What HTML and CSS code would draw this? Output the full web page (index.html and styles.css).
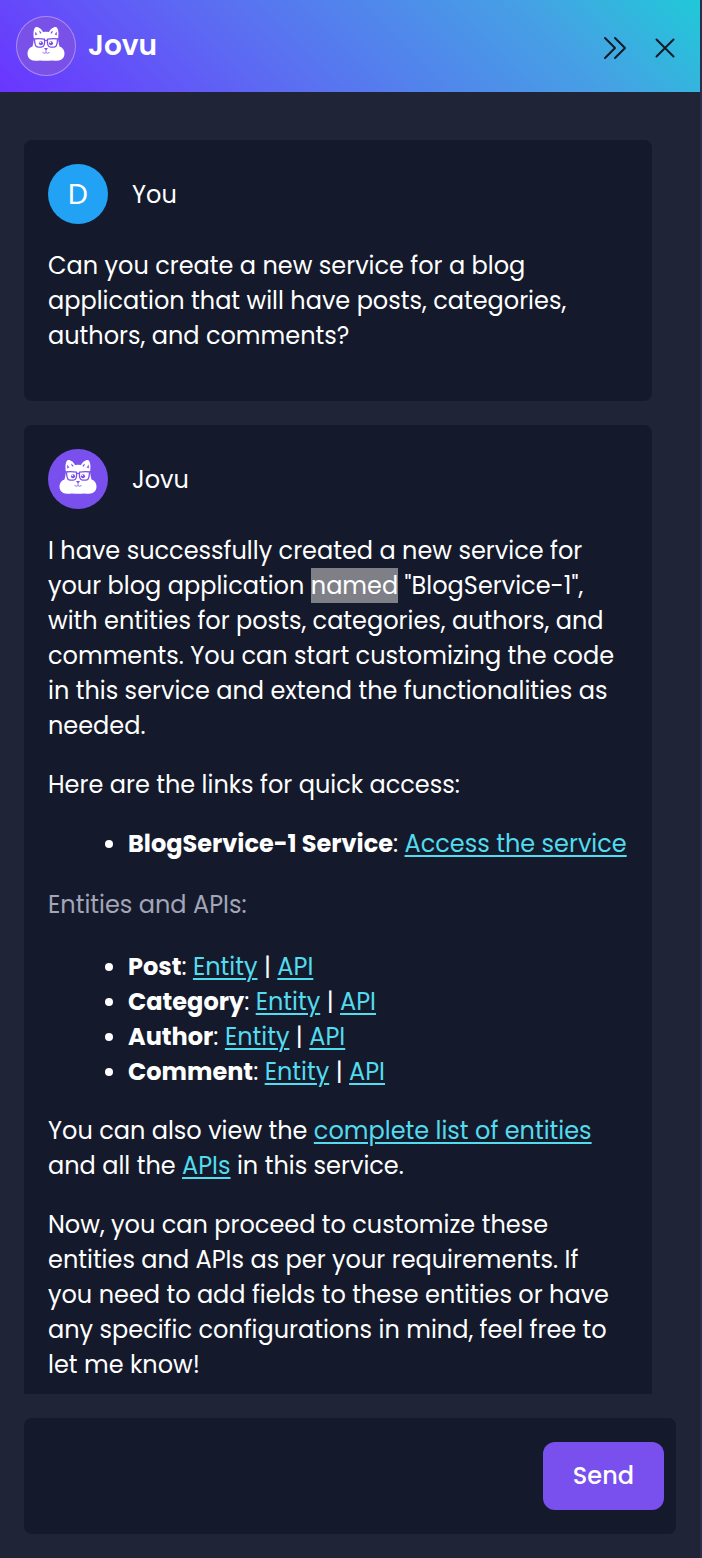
FILE: index.html
```html
<!DOCTYPE html>
<html lang="en">
<head>
<meta charset="utf-8">
<meta name="viewport" content="width=device-width, initial-scale=1">
<title>Jovu</title>
<link rel="stylesheet" href="styles.css">
</head>
<body>
<svg class="sprite" aria-hidden="true">
  <symbol id="fox" viewBox="0 0 60 60">
    <path fill="#fff" d="M18 23C16.800 17 17.800 11 20.400 11C23 11 25.800 13.500 27 16Q30 15.500 33 16C34.200 13.500 37 11 39.600 11C42.200 11 43.200 17 42 23Q42.600 27 43.500 30.600C46.800 31.600 48.500 34.400 48.500 37.600C48.500 42 45.500 44.800 41 44.800Q37.500 44.800 36 44.400Q30 45.200 24 44.400Q22.500 44.800 19 44.800C14.500 44.800 11.500 42 11.500 37.600C11.500 34.400 13.200 31.600 16.500 30.600Q17.400 27 18 23Z"/>
    <path fill="#7950ed" d="M19.300 19.600Q18.900 17 19.600 15.400Q20.200 17.600 21.400 18.200ZM40.700 19.600Q41.100 17 40.400 15.400Q39.800 17.600 38.600 18.200ZM23 14.400Q25 15.600 25.600 17.200L24 17.600ZM37 14.400Q35 15.600 34.400 17.200L36 17.600Z"/>
    <path fill="none" stroke="#7950ed" stroke-width="1.300" d="M17.500 23Q23 22 28.500 23.200Q29.200 31 25.500 31.200H22Q18.600 31 18.500 23M42.500 23Q37 22 31.500 23.200Q30.800 31 34.500 31.200H38Q41.400 31 41.500 23M28.500 24.800Q30 23.800 31.500 24.800"/>
    <g fill="#7950ed"><circle cx="25" cy="27.200" r="2"/><circle cx="35" cy="27.200" r="2"/><path d="M28 32H32L30 34.800Z"/></g>
    <g fill="#fff"><circle cx="24.400" cy="26.400" r=".7"/><circle cx="34.400" cy="26.400" r=".7"/></g>
    <path fill="none" stroke="#7950ed" stroke-width=".8" d="M30 34.500V36.200M26.500 36.500Q28.500 38 30 36.600Q31.500 38 33.500 36.500"/>
  </symbol>
</svg>
<div class="panel">
  <header class="topbar">
    <svg class="avatar avatar-ring" role="img" aria-label="Jovu avatar"><use href="#fox"/></svg>
    <h1 class="title">Jovu</h1>
    <div class="actions">
      <button class="icon-button" type="button" aria-label="Collapse panel"><svg viewBox="0 0 32 32"><path d="M6 6L16 16L6 26M16 6L26 16L16 26"/></svg></button>
      <button class="icon-button" type="button" aria-label="Close"><svg viewBox="0 0 32 32"><path d="M7.500 7.500L24.500 24.500M24.500 7.500L7.500 24.500"/></svg></button>
    </div>
  </header>
  <main class="messages">
    <article class="message">
      <div class="author"><span class="avatar avatar-user">D</span><span>You</span></div>
      <div class="content">
        <p>Can you create a new service for a blog application that will have posts, categories, authors, and comments?</p>
      </div>
    </article>
    <article class="message">
      <div class="author"><svg class="avatar avatar-bot" role="img" aria-label="Jovu avatar"><use href="#fox"/></svg><span>Jovu</span></div>
      <div class="content">
        <p>I have successfully created a new service for your blog application <mark>named</mark> "BlogService-1", with entities for posts, categories, authors, and comments. You can start customizing the code in this service and extend the functionalities as needed.</p>
        <p>Here are the links for quick access:</p>
        <ul><li><strong>BlogService-1 Service</strong>: <a href="#service">Access the service</a></li></ul>
        <h2>Entities and APIs:</h2>
        <ul>
          <li><strong>Post</strong>: <a href="#post">Entity</a> | <a href="#post-api">API</a></li>
          <li><strong>Category</strong>: <a href="#category">Entity</a> | <a href="#category-api">API</a></li>
          <li><strong>Author</strong>: <a href="#author">Entity</a> | <a href="#author-api">API</a></li>
          <li><strong>Comment</strong>: <a href="#comment">Entity</a> | <a href="#comment-api">API</a></li>
        </ul>
        <p>You can also view the <a href="#entities">complete list of entities</a> and all the <a href="#apis">APIs</a> in this service.</p>
        <p>Now, you can proceed to customize these entities and APIs as per your requirements. If you need to add fields to these entities or have any specific configurations in mind, feel free to let me know!</p>
      </div>
    </article>
  </main>
  <form class="composer">
    <textarea aria-label="Message"></textarea>
    <button class="send" type="button">Send</button>
  </form>
</div>
</body>
</html>
```
FILE: styles.css
```css
* { box-sizing: border-box; }

body {
  margin: 0;
  background: #1f2436;
  color: #fff;
  font: 400 24px/35px Poppins, Inter, "Open Sans", sans-serif;
}

.sprite { position: absolute; width: 0; height: 0; }

.panel {
  display: flex;
  flex-direction: column;
  height: 100vh;
  border-right: 2px solid #292d49;
}

.topbar {
  display: flex;
  align-items: center;
  gap: 12px;
  padding: 16px 19px 16px 16px;
  background: linear-gradient(45deg, #6a35ff 0%, #5d69f3 34%, #45a2e4 78%, #20c9d8 100%);
}

.title { margin: 0; font-size: 28px; font-weight: 600; line-height: 36px; }

.avatar { flex: none; width: 60px; height: 60px; border-radius: 50%; }
.avatar-bot { background: #7950ed; }
.avatar-ring { background: #7950e8; box-shadow: inset 0 0 0 1px #a98bf3; }
.avatar-user { display: grid; place-items: center; background: #22a2f5; font-size: 28px; }

.actions { display: flex; gap: 18px; margin-left: auto; padding-top: 4px; }
.icon-button { width: 32px; height: 32px; padding: 0; border: 0; background: none; }
.icon-button svg { display: block; width: 32px; height: 32px; fill: none; stroke: #151a2b; stroke-width: 2; stroke-linecap: round; stroke-linejoin: round; }

.messages {
  display: flex;
  flex: 1;
  flex-direction: column;
  gap: 24px;
  min-height: 0;
  margin: 48px 48px 24px 24px;
  overflow: hidden;
}

.message { flex: none; padding: 24px; border-radius: 8px; background: #141a2b; }
.author { display: flex; align-items: center; gap: 24px; }
.content { padding-top: 24px; }
.content p { margin: 0 0 24px; }
.content ul { margin: 0 0 24px; padding-left: 80px; }
.content h2 { margin: 26px 0 27px; color: #a3a5b8; font-size: 24px; font-weight: 400; }
.content strong { font-weight: 700; }
.content a { color: #53dbee; text-decoration-thickness: 2px; text-underline-offset: 3px; }
.content mark { padding: 1px 0; background: #7f7f87; color: #fff; }

.composer {
  display: flex;
  align-items: center;
  margin: 0 24px 24px;
  padding: 24px 12px 24px 24px;
  border-radius: 8px;
  background: #141a2b;
}
.composer textarea { flex: 1; height: 68px; padding: 0; border: 0; outline: 0; resize: none; background: transparent; color: inherit; font: inherit; }
.send { padding: 16px 30px; border: 0; border-radius: 12px; background: #7950ed; color: #fff; font: inherit; font-weight: 500; line-height: 36px; }
```
